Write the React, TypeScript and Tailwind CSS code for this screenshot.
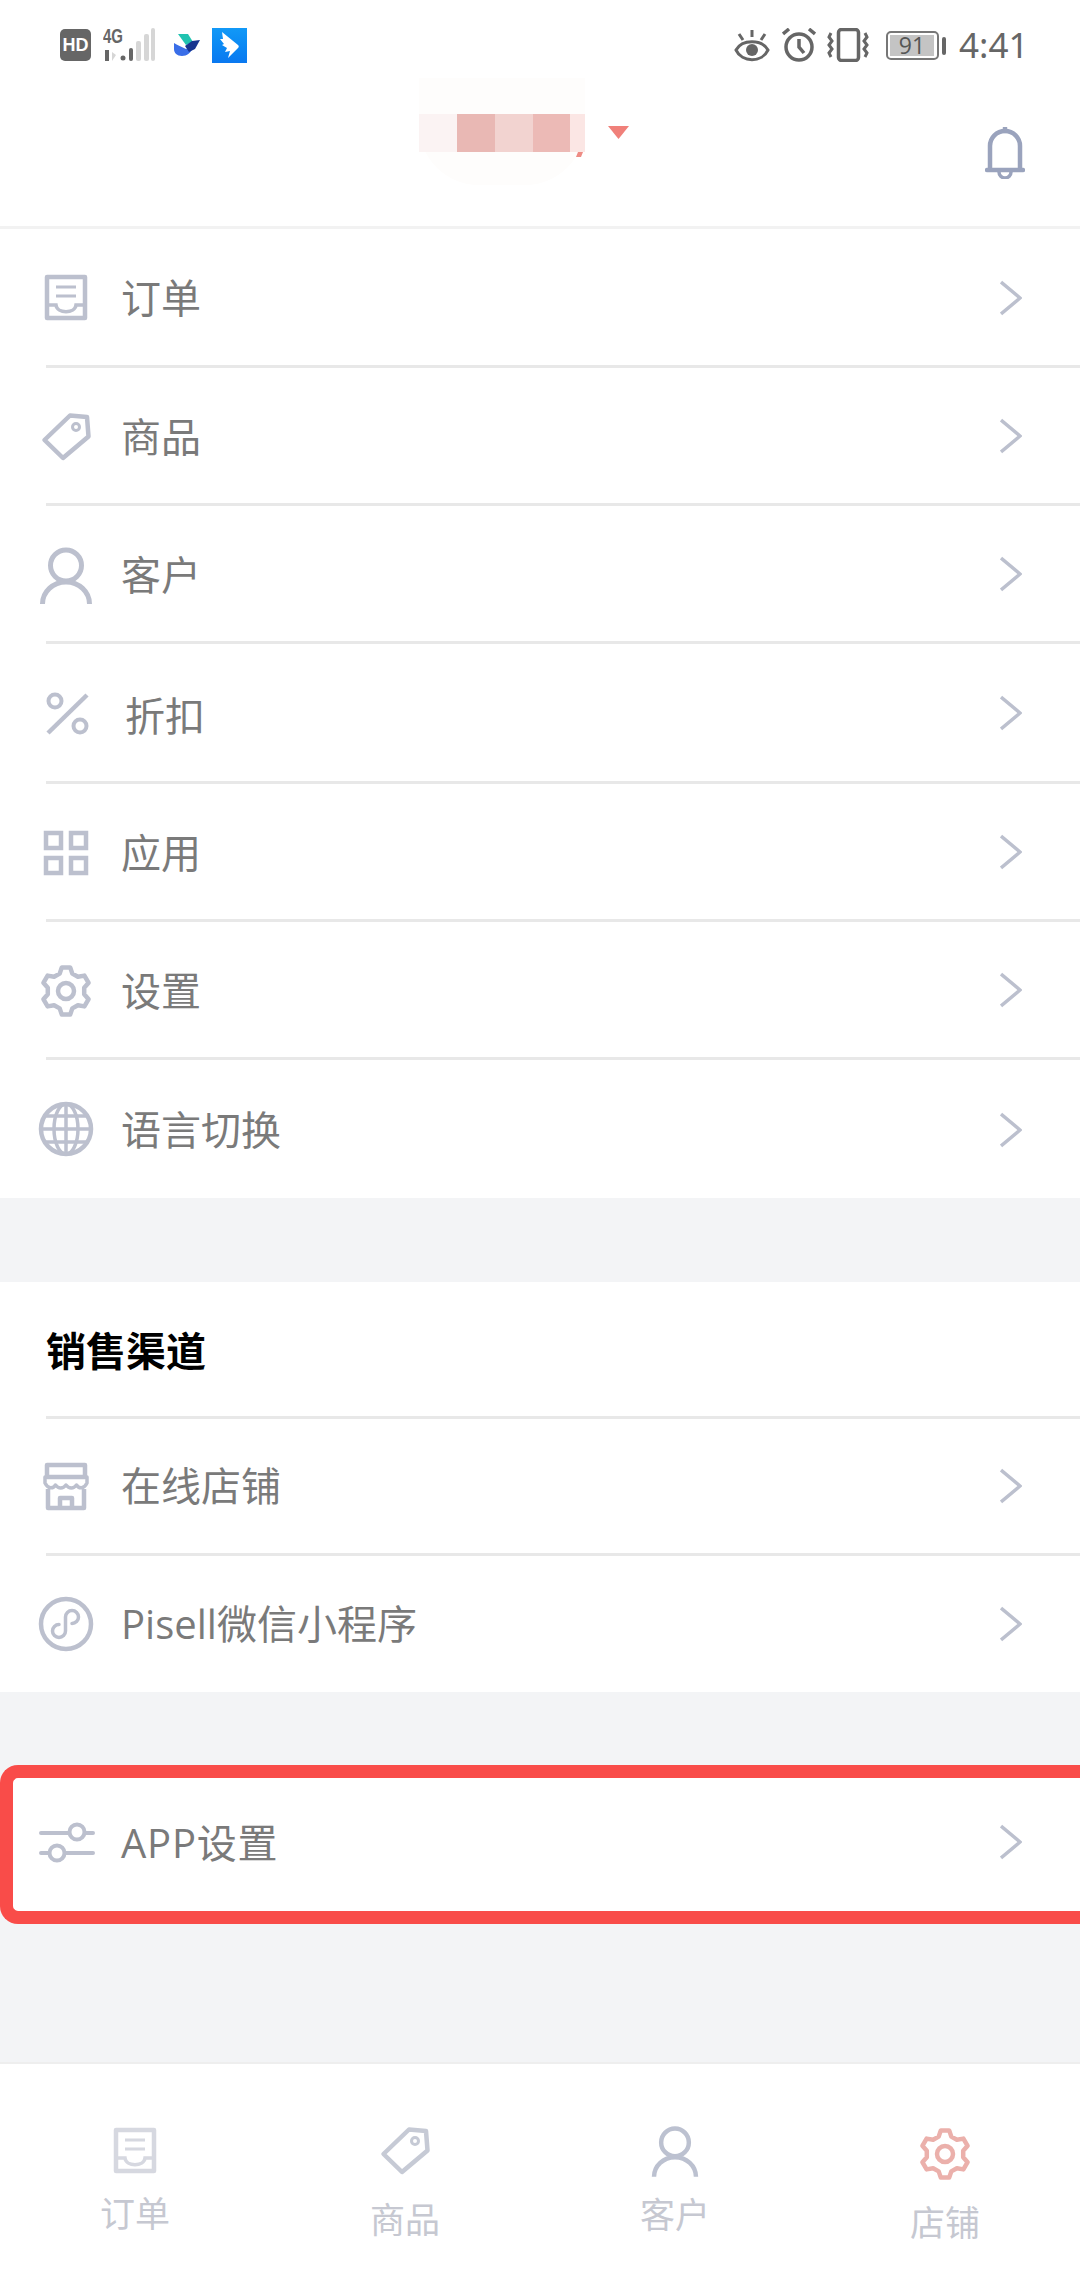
import type { ReactNode } from "react";

const gearPath = () => {
  let d = "";
  for (let k = 0; k < 6; k++) {
    const a = -90 + 60 * k;
    const pts: [number, number][] = [
      [a - 20, 18.5],
      [a - 10, 24],
      [a + 10, 24],
      [a + 20, 18.5],
    ];
    pts.forEach(([deg, r]) => {
      const rad = (deg * Math.PI) / 180;
      const x = (28 + r * Math.cos(rad)).toFixed(1);
      const y = (29 + r * Math.sin(rad)).toFixed(1);
      d += `${d ? "L" : "M"}${x} ${y}`;
    });
  }
  return d + "Z";
};

type IconProps = { className?: string };

function Svg({ className = "w-[56px] h-[56px] text-[#bcc0ce]", children }: IconProps & { children: ReactNode }) {
  return (
    <svg viewBox="0 0 56 56" fill="none" stroke="currentColor" strokeWidth="4.500" className={`shrink-0 overflow-visible ${className}`}>
      {children}
    </svg>
  );
}

const OrderIcon = (p: IconProps) => (
  <Svg {...p}>
    <rect x="9" y="8" width="38" height="41" strokeLinejoin="round" />
    <path d="M18 18h20M18 27h20" strokeWidth="3" />
    <path d="M9 36h9c1 9 19 9 20 0h9" strokeWidth="3.500" />
  </Svg>
);

const TagIcon = (p: IconProps) => (
  <Svg {...p}>
    <path d="M6.500 32L32 7.500l17 1.500 1.500 19.500L25 50z" strokeLinejoin="round" />
    <circle cx="38" cy="19" r="3.500" strokeWidth="3" />
  </Svg>
);

const UserIcon = (p: IconProps) => (
  <Svg {...p}>
    <circle cx="28" cy="19.500" r="15.500" strokeWidth="5" />
    <path d="M4.500 58A23.500 22 0 0 1 51.500 58" strokeWidth="5" />
  </Svg>
);

const PercentIcon = (p: IconProps) => (
  <Svg {...p}>
    <circle cx="17" cy="16" r="6.500" strokeWidth="4" />
    <circle cx="42" cy="41" r="6.500" strokeWidth="4" />
    <path d="M49 10L10 48" />
  </Svg>
);

const GridIcon = (p: IconProps) => (
  <Svg {...p}>
    <rect x="8" y="9" width="15" height="15" />
    <rect x="33" y="9" width="15" height="15" />
    <rect x="8" y="34" width="15" height="15" />
    <rect x="33" y="34" width="15" height="15" />
  </Svg>
);

const GearIcon = (p: IconProps) => (
  <Svg {...p}>
    <path d={gearPath()} strokeLinejoin="round" />
    <circle cx="28" cy="29" r="8" />
  </Svg>
);

const GlobeIcon = (p: IconProps) => (
  <Svg {...p}>
    <circle cx="28" cy="28" r="25" />
    <ellipse cx="28" cy="28" rx="12" ry="25" strokeWidth="3.500" />
    <path d="M28 3v50M3 28h50M7 15h42M7 41h42" strokeWidth="3.500" />
  </Svg>
);

const StoreIcon = (p: IconProps) => (
  <Svg {...p}>
    <path d="M9 7h38v12H9z" strokeLinejoin="round" />
    <path d="M7 19h42v6c-3 6-8 6-10.500 2c-3 4-7.500 4-10.500 0c-3 4-7.500 4-10.500 0c-2.500 4-7.500 4-10.500-2z" strokeLinejoin="round" strokeWidth="3.500" />
    <path d="M10 31v19h36V31M22 50V40h12v10" strokeLinejoin="round" />
  </Svg>
);

const MiniIcon = (p: IconProps) => (
  <Svg {...p}>
    <circle cx="28" cy="28" r="25" />
    <path d="M21 28.500a6.500 6.500 0 1 0 6.500 6.500V21a6.500 6.500 0 1 1 6.500 6.500" strokeWidth="3.500" strokeLinecap="round" />
  </Svg>
);

const SliderIcon = (p: IconProps) => (
  <Svg {...p}>
    <path d="M3 19h27M47 19h8M3 39h8M28 39h27" strokeWidth="4" strokeLinecap="round" />
    <circle cx="39" cy="18" r="7.500" strokeWidth="4" />
    <circle cx="19" cy="39" r="7.500" strokeWidth="4" />
  </Svg>
);

function Chevron({ className = "" }: { className?: string }) {
  return (
    <svg viewBox="0 0 22 36" fill="none" stroke="#bcc0ce" strokeWidth="3.500" className={`ml-auto mr-[58px] h-[36px] w-[22px] shrink-0 ${className}`}>
      <path d="M1 2l19 16L1 34" />
    </svg>
  );
}

function Divider() {
  return <div className="ml-[46px] h-[3px] bg-[#e8e8e8]" />;
}

function Row({
  icon,
  label,
  height,
  labelClass = "ml-[27px] mt-[2px]",
  chevronClass = "mt-px",
}: {
  icon: ReactNode;
  label: string;
  height: string;
  labelClass?: string;
  chevronClass?: string;
}) {
  return (
    <div className={`flex items-center pl-[38px] ${height}`}>
      {icon}
      <span className={`text-[40px] leading-[50px] text-[#7a7a7a] ${labelClass}`}>{label}</span>
      <Chevron className={chevronClass} />
    </div>
  );
}

function StatusBar() {
  return (
    <div className="flex h-[76px] items-start pl-[60px] pt-[28px] text-[#666666]">
      <div className="mt-px flex h-[32px] w-[31px] items-center justify-center rounded-[5px] bg-[#666666] font-['Liberation_Sans'] text-[18px] font-bold leading-none text-white">HD</div>
      <div className="relative ml-[12px] h-[34px] w-[54px]">
        <span className="absolute left-0 top-0 origin-left scale-x-75 font-['Liberation_Sans'] text-[20px] font-bold leading-[16px] text-[#666666]">4G</span>
        <svg viewBox="0 0 54 34" className="h-[34px] w-[54px]" fill="#666666">
          <rect x="2" y="22" width="4" height="11" />
          <circle cx="20" cy="30" r="2.500" />
          <rect x="26" y="20" width="4" height="13" rx="2" />
          <rect x="33" y="13" width="5" height="20" rx="2" fill="#d6d6d6" />
          <rect x="41" y="6" width="5" height="27" rx="2" fill="#d6d6d6" />
          <rect x="48" y="0" width="4" height="33" rx="2" fill="#d6d6d6" />
          <path d="M9 24l4 3-4 6z" fill="#d6d6d6" />
        </svg>
      </div>
      <svg viewBox="0 0 26 22" className="ml-[17px] mt-[6px] h-[22px] w-[26px]">
        <path d="M4 0h10l5 8-7 3z" fill="#20c3b0" />
        <path d="M0 9c3 2 8 4 12 6l7-2c-2 6-6 9-11 9C3 22 0 19 0 15z" fill="#3a6ee8" />
        <path d="M11 12l7-5 8-1-5 9-6 3z" fill="#17358f" />
      </svg>
      <div className="ml-[12px] flex h-[35px] w-[35px] items-center justify-center bg-linear-to-b from-[#1299f7] to-[#0a78f0]">
        <svg viewBox="0 0 35 35" className="h-[35px] w-[35px]" fill="white">
          <path d="M10 4l16 13c1 1 1 2 0 3L16 30l2-7-5 1 2-4-5-3 2-1-4-5 3 0z" />
        </svg>
      </div>

      <svg viewBox="0 0 36 32" fill="none" stroke="currentColor" strokeWidth="3" className="ml-[487px] mt-[2px] h-[32px] w-[36px]">
        <path d="M2 20C8 9 28 9 34 20C28 33 8 33 2 20z" />
        <circle cx="18" cy="20" r="6" fill="currentColor" stroke="none" />
        <path d="M18 0v7M5 4l4 6M31 4l-4 6" />
      </svg>
      <svg viewBox="0 0 34 34" fill="none" stroke="currentColor" strokeWidth="3.500" className="ml-[12px] h-[34px] w-[34px]">
        <circle cx="17" cy="19" r="13" />
        <path d="M17 11v8l5 6M1 6l6-5M33 6l-6-5" />
      </svg>
      <svg viewBox="0 0 42 34" fill="none" stroke="currentColor" strokeWidth="3.500" className="ml-[11px] h-[34px] w-[42px]">
        <rect x="11.500" y="1.500" width="20" height="31" rx="3" />
        <path d="M4 5l-2 4 3 4-3 4 3 4-3 4 2 4M38 5l2 4-3 4 3 4-3 4 3 4-2 4" strokeWidth="3" />
      </svg>
      <div className="ml-[17px] mt-[3px] flex h-[29px] w-[53px] items-center rounded-[5px] border-2 border-[#777777] p-[2px]">
        <div className="flex h-full w-[44px] items-center justify-center bg-[#c4c4c4] text-[23px] leading-none text-[#555555]">91</div>
      </div>
      <div className="ml-[3px] mt-[9px] h-[18px] w-[4px] rounded-[2px] bg-[#666666]" />
      <span className="ml-[13px] mt-[-5px] font-['Noto_Sans'] text-[35px] leading-[44px] text-[#666666]">4:41</span>
    </div>
  );
}

function Header() {
  return (
    <div className="flex h-[153px] items-start border-b-[3px] border-[#f2f2f2] bg-white pl-[419px]">
      <div className="relative mt-[2px] h-[107px] w-[166px] rounded-b-[60px] bg-[#fefdfc] pt-[36px]">
        <div className="flex h-[38px]">
          <div className="w-[38px] bg-[#fbf3f3]" />
          <div className="w-[38px] bg-[#e9b8b4]" />
          <div className="w-[38px] bg-[#f2d3d0]" />
          <div className="w-[37px] bg-[#ecbab6]" />
          <div className="w-[15px] bg-[#fbe6e4]" />
        </div>
        <svg viewBox="0 0 9 5" className="absolute left-[157px] top-[74px] h-[5px] w-[9px]" fill="#ee8c85">
          <path d="M2 0h5L5 5H0z" />
        </svg>
      </div>
      <svg viewBox="0 0 21 13" className="ml-[23px] mt-[50px] h-[13px] w-[21px]" fill="#f0807a">
        <path d="M0 0h21L10.500 13z" />
      </svg>
      <svg viewBox="0 0 40 52" fill="none" stroke="#9aa3bd" strokeWidth="4.500" className="ml-[356px] mt-[51px] h-[52px] w-[40px]">
        <path d="M5 42V19a15 15 0 0 1 30 0v23" />
        <path d="M2 43h36" strokeLinecap="round" />
        <path d="M20 1v3" strokeLinecap="round" />
        <path d="M14 45a6 6 0 0 0 12 0" strokeWidth="3.500" />
      </svg>
    </div>
  );
}

const navItems = [
  { label: "订单", icon: <OrderIcon className="h-[56px] w-[56px] text-[#d6d8e0]" />, textClass: "mt-[18px]" },
  { label: "商品", icon: <TagIcon className="h-[56px] w-[56px] text-[#c6cad5]" />, textClass: "mt-[24px]" },
  { label: "客户", icon: <UserIcon className="h-[50px] w-[50px] text-[#bcc1d0]" />, textClass: "mt-[19px]" },
  { label: "店铺", icon: <GearIcon className="h-[56px] w-[56px] translate-y-[3px] text-[#ebb0ab]" />, textClass: "mt-[27px]" },
];

export default function App() {
  return (
    <div className="flex h-[2280px] w-[1080px] flex-col overflow-hidden bg-[#f3f4f6] font-['Open_Sans','Noto_Sans_CJK_SC',sans-serif]">
      <div className="bg-white">
        <StatusBar />
      </div>
      <Header />

      <div className="bg-white">
        <Row icon={<OrderIcon />} label="订单" height="h-[136px]" />
        <Divider />
        <Row icon={<TagIcon />} label="商品" height="h-[135px]" />
        <Divider />
        <Row icon={<UserIcon />} label="客户" height="h-[135px]" />
        <Divider />
        <Row icon={<PercentIcon />} label="折扣" height="h-[137px]" labelClass="ml-[31px] mt-[6px]" />
        <Divider />
        <Row icon={<GridIcon />} label="应用" height="h-[135px]" />
        <Divider />
        <Row icon={<GearIcon />} label="设置" height="h-[135px]" />
        <Divider />
        <Row icon={<GlobeIcon />} label="语言切换" height="h-[138px]" />
      </div>

      <div className="mt-[84px] bg-white">
        <div className="flex h-[134px] items-center pl-[46px] pt-[4px] text-[40px] font-bold leading-[50px] text-black">销售渠道</div>
        <Divider />
        <Row icon={<StoreIcon />} label="在线店铺" height="h-[134px]" labelClass="ml-[27px]" chevronClass="-mt-px" />
        <Divider />
        <Row icon={<MiniIcon />} label="Pisell微信小程序" height="h-[136px]" labelClass="ml-[27px]" chevronClass="" />
      </div>

      <div className="mt-[73px] flex h-[159px] items-center rounded-l-[18px] border-y-[13px] border-l-[13px] border-[#f94c49] bg-white pb-[5px] pl-[25px]">
        <SliderIcon />
        <span className="ml-[27px] mt-[2px] text-[40px] leading-[50px] tracking-[0.8px] text-[#7a7a7a]">APP设置</span>
        <Chevron />
      </div>

      <div className="mt-auto grid h-[218px] grid-cols-4 border-t-2 border-[#eeeeee] bg-white pt-[58px]">
        {navItems.map((item) => (
          <div key={item.label} className="flex flex-col items-center">
            <div className="flex h-[56px] items-center justify-center">{item.icon}</div>
            <span className={`text-[35px] leading-[36px] text-[#c6c8d1] ${item.textClass}`}>{item.label}</span>
          </div>
        ))}
      </div>
    </div>
  );
}
